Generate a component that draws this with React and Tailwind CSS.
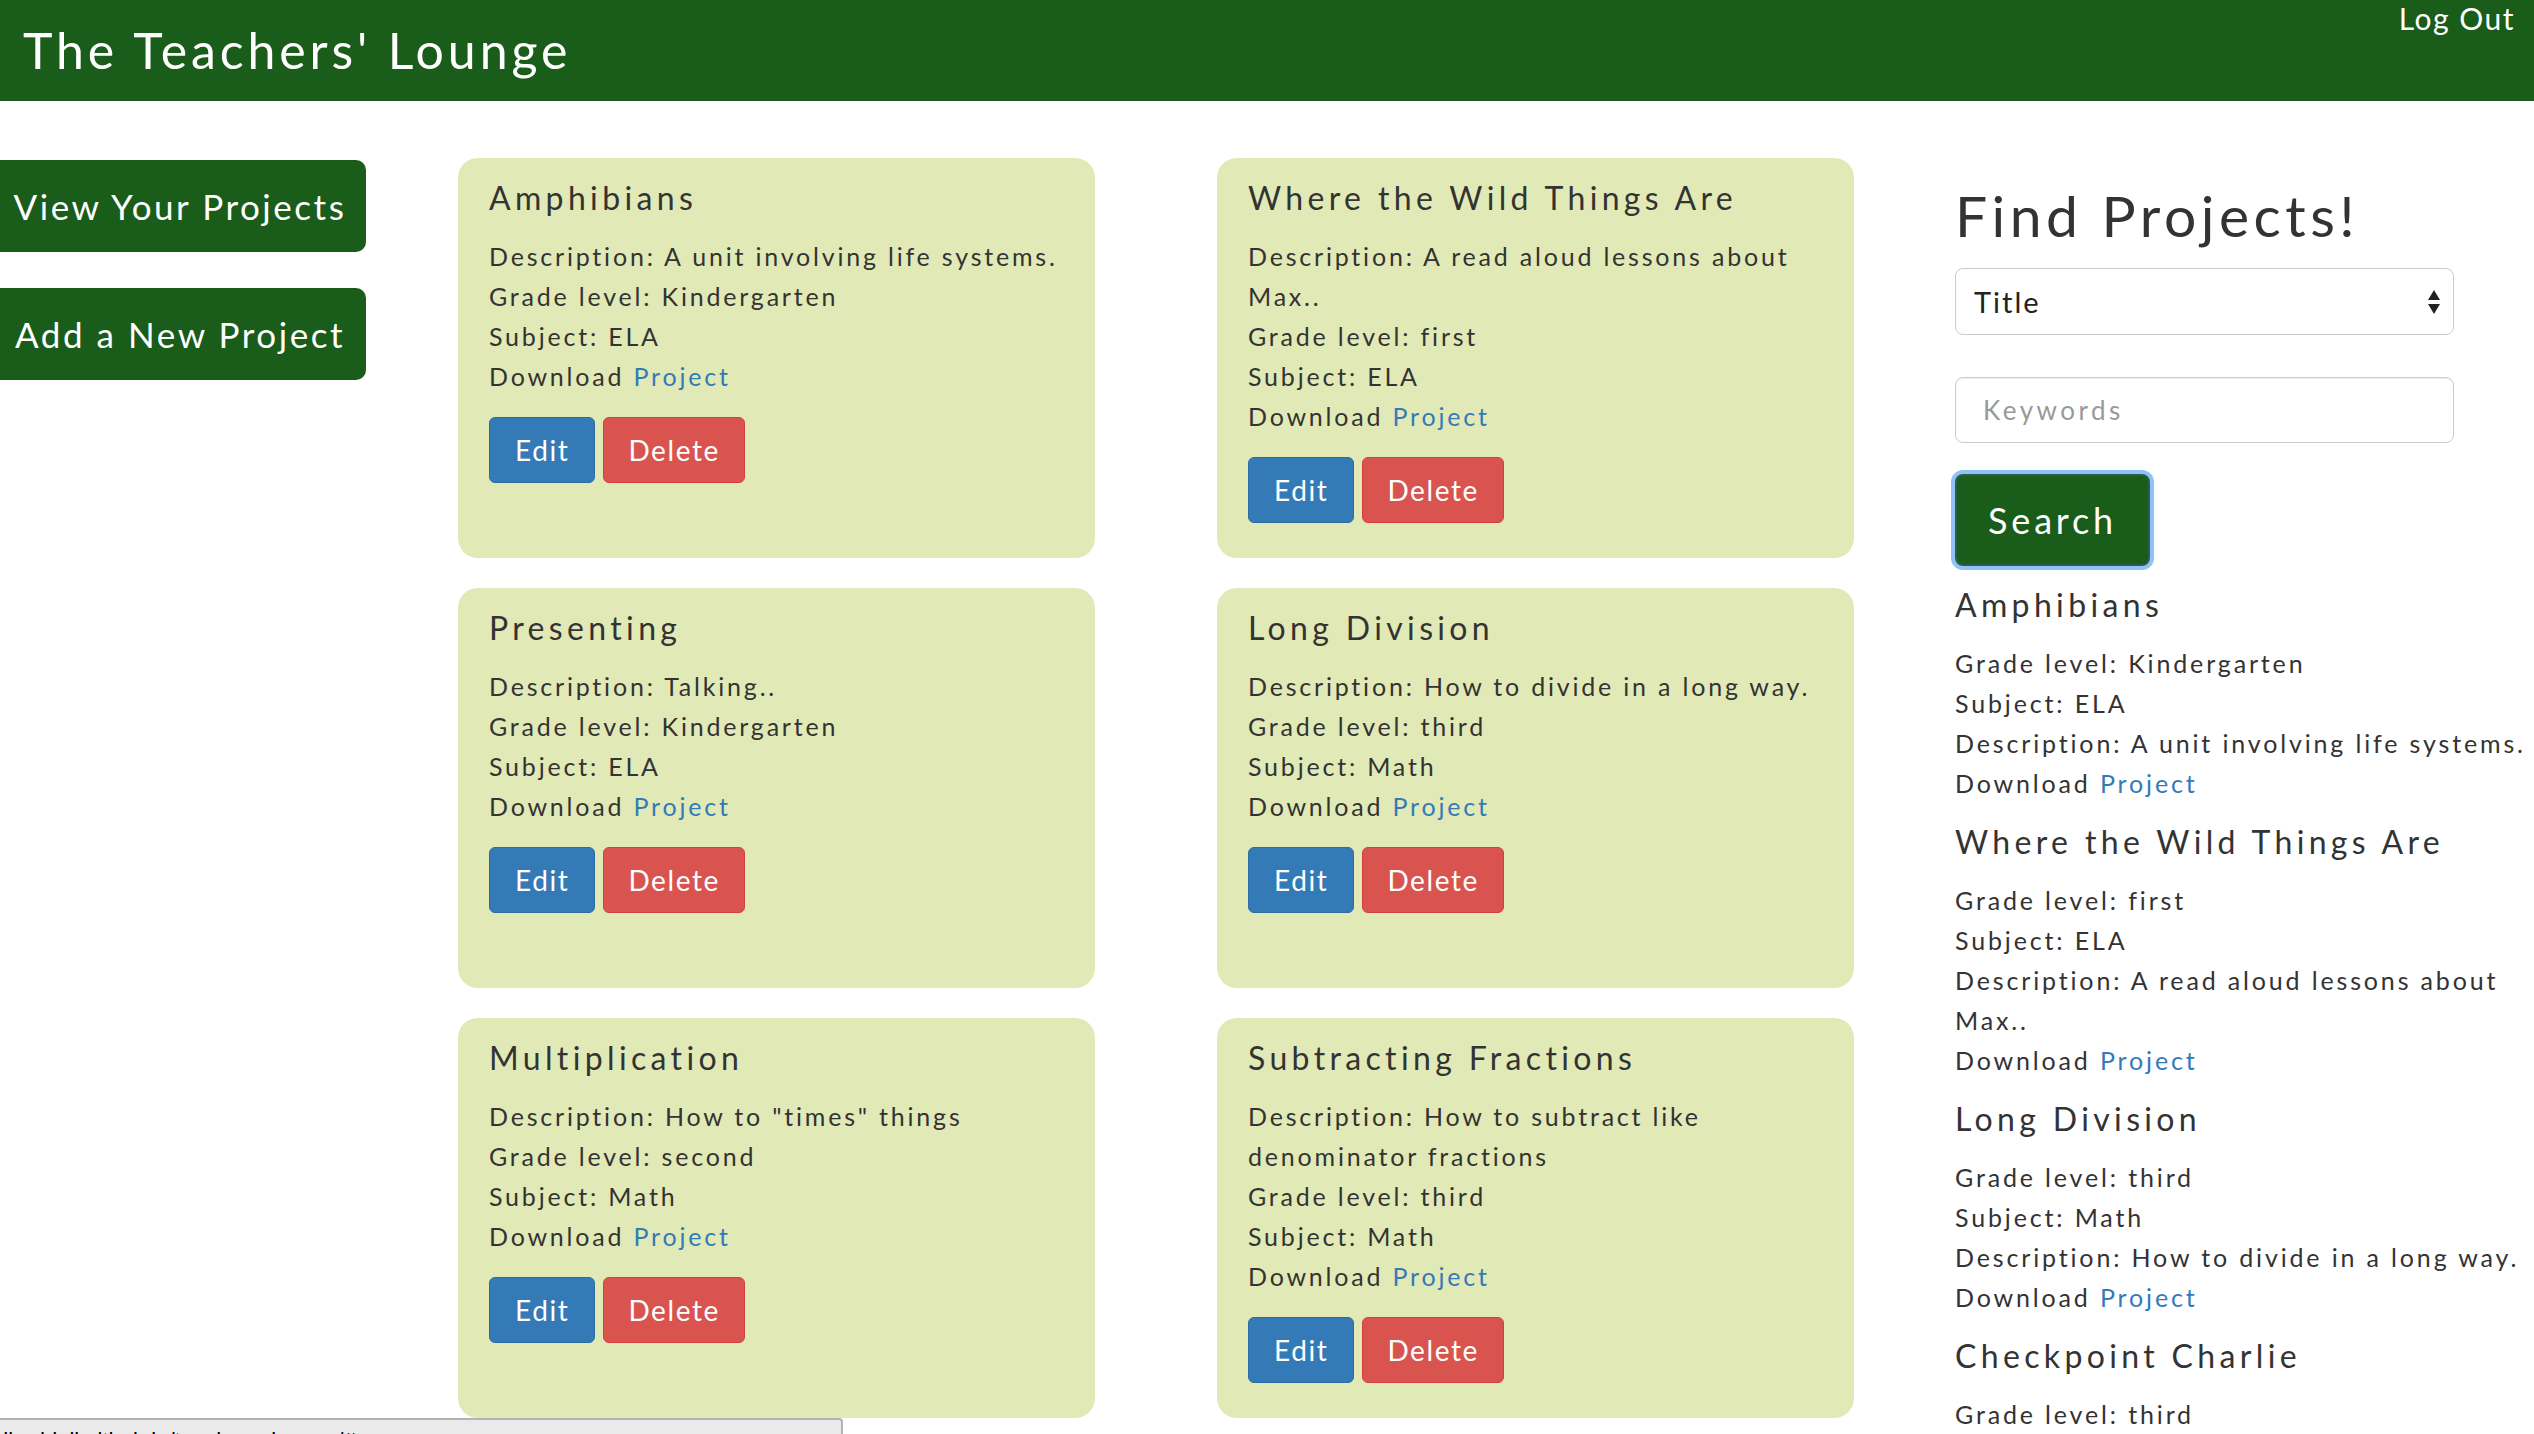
const PROJECTS = [
  {
    title: "Amphibians",
    description: "A unit involving life systems.",
    grade: "Kindergarten",
    subject: "ELA",
  },
  {
    title: "Where the Wild Things Are",
    description: "A read aloud lessons about Max..",
    grade: "first",
    subject: "ELA",
  },
  {
    title: "Presenting",
    description: "Talking..",
    grade: "Kindergarten",
    subject: "ELA",
  },
  {
    title: "Long Division",
    description: "How to divide in a long way.",
    grade: "third",
    subject: "Math",
  },
  {
    title: "Multiplication",
    description: 'How to "times" things',
    grade: "second",
    subject: "Math",
  },
  {
    title: "Subtracting Fractions",
    description: "How to subtract like denominator fractions",
    grade: "third",
    subject: "Math",
  },
];

const RESULTS = [
  PROJECTS[0],
  PROJECTS[1],
  PROJECTS[3],
  { title: "Checkpoint Charlie", grade: "third" },
];

function DownloadLine() {
  return (
    <p>
      Download{" "}
      <a href="#" className="text-[#337ab7]">
        Project
      </a>
    </p>
  );
}

function ProjectCard({ project }) {
  return (
    <div className="h-[400px] rounded-[20px] bg-[#e1eab6] pt-[22px] pl-[31px] pr-[22px]">
      <h3 className="text-[32px] leading-[36px] tracking-[4.35px]">{project.title}</h3>
      <div className="mt-[20px] text-[25px] leading-[40px] tracking-[2.8px]">
        <p>Description: {project.description}</p>
        <p>Grade level: {project.grade}</p>
        <p>Subject: {project.subject}</p>
        <DownloadLine />
      </div>
      <div className="mt-[21px] flex gap-[8px]">
        <button
          type="button"
          className="h-[66px] rounded-[6px] border border-[#2e6da4] bg-[#337ab7] px-[25px] text-[28px] tracking-[1.6px] text-white"
        >
          Edit
        </button>
        <button
          type="button"
          className="h-[66px] rounded-[6px] border border-[#d43f3a] bg-[#d9534f] px-[24px] text-[28px] tracking-[1.6px] text-white"
        >
          Delete
        </button>
      </div>
    </div>
  );
}

function ResultItem({ item }) {
  return (
    <div className="mt-[21px] first:mt-[20px]">
      <h3 className="text-[32px] leading-[36px] tracking-[4.35px]">{item.title}</h3>
      <div className="mt-[20px] text-[25px] leading-[40px] tracking-[2.85px]">
        <p>Grade level: {item.grade}</p>
        {item.subject && <p>Subject: {item.subject}</p>}
        {item.description && <p>Description: {item.description}</p>}
        {item.subject && <DownloadLine />}
      </div>
    </div>
  );
}

export default function App() {
  return (
    <div className="relative h-screen overflow-hidden bg-white font-['Lato',sans-serif] text-[#333]">
      <header className="flex h-[101px] justify-between bg-[#1a5c1a] text-white">
        <h1 className="self-center pb-[2px] pl-[23px] text-[50px] leading-[60px] tracking-[3.9px]">
          The Teachers' Lounge
        </h1>
        <a href="#" className="self-start pr-[19px] text-[30px] leading-[36px] tracking-[1.5px]">
          Log Out
        </a>
      </header>

      <main className="flex pt-[57px]">
        <nav className="mt-[2px] flex w-[366px] shrink-0 flex-col gap-[36px]">
          <a
            href="#"
            className="flex h-[92px] items-center justify-center rounded-r-[10px] bg-[#1a5c1a] pr-[6px] text-[35px] tracking-[2.55px] text-white"
          >
            View Your Projects
          </a>
          <a
            href="#"
            className="flex h-[92px] items-center justify-center rounded-r-[10px] bg-[#1a5c1a] pr-[6px] text-[35px] tracking-[2.55px] text-white"
          >
            Add a New Project
          </a>
        </nav>

        <section className="ml-[92px] grid w-[1396px] shrink-0 grid-cols-[637px_637px] content-start gap-x-[122px] gap-y-[30px]">
          {PROJECTS.map((p) => (
            <ProjectCard key={p.title} project={p} />
          ))}
        </section>

        <aside className="ml-[101px] min-w-0 flex-1">
          <h2 className="mt-[26px] text-[57px] leading-[63px] tracking-[4.5px]">Find Projects!</h2>
          <div className="relative mt-[21px] w-[499px]">
            <select className="h-[67px] w-full appearance-none rounded-[8px] border border-[#ccc] bg-white pl-[18px] text-[29px] tracking-[2px] text-[#222]">
              <option>Title</option>
              <option>Grade level</option>
              <option>Subject</option>
            </select>
            <svg
              className="pointer-events-none absolute right-[14px] top-[22px]"
              width="12"
              height="24"
              viewBox="0 0 12 24"
            >
              <path d="M6 0 L12 10 L0 10 Z M0 14 L12 14 L6 24 Z" fill="#222" />
            </svg>
          </div>
          <input
            type="text"
            placeholder="Keywords"
            className="mt-[42px] h-[66px] w-[499px] rounded-[8px] border border-[#ccc] pl-[27px] text-[26px] tracking-[3.5px] shadow-[inset_0_1px_1px_rgba(0,0,0,0.075)] placeholder:text-[#999]"
          />
          <button
            type="button"
            className="mt-[31px] block h-[92px] w-[195px] rounded-[8px] border-2 border-[#2b5d4c] bg-[#1a5c1a] text-[36px] tracking-[3.8px] text-white ring-[4px] ring-[#8fc3f3]"
          >
            Search
          </button>
          {RESULTS.map((r) => (
            <ResultItem key={r.title} item={r} />
          ))}
        </aside>
      </main>

      <div className="absolute bottom-0 left-0 h-[16px] w-[843px] overflow-hidden rounded-tr-[4px] border-t-2 border-r-2 border-[#b3b3b3] bg-[#eaeaea] font-['Liberation_Sans',sans-serif] text-[22px] leading-[26px] text-black">
        <div className="-ml-[4px] mt-[8px]">dbuddell.github.io/teachers_lounge/#</div>
      </div>
    </div>
  );
}
